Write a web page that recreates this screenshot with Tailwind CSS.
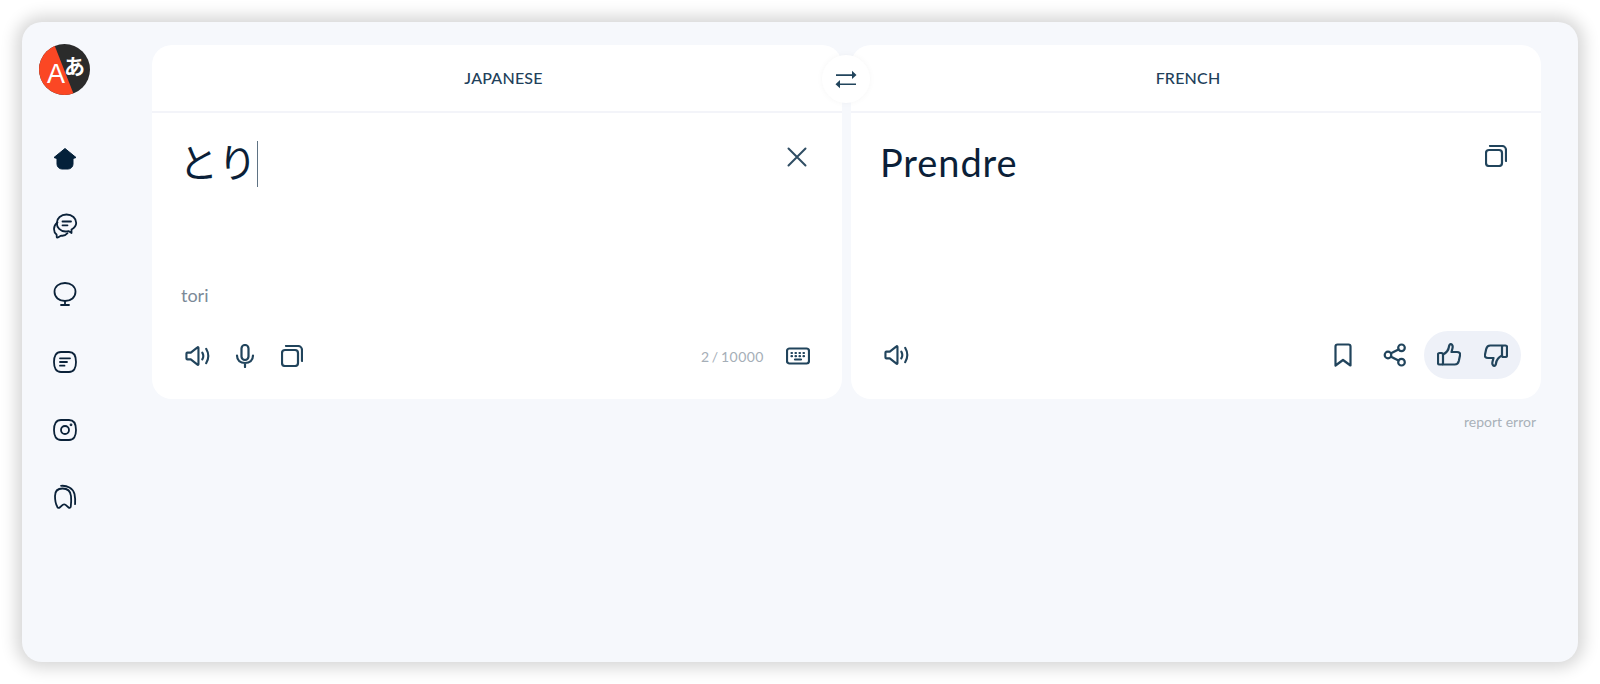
<!DOCTYPE html>
<html>
<head>
<meta charset="utf-8">
<script src="https://cdn.jsdelivr.net/npm/@tailwindcss/browser@4"></script>
</head>
<body class="bg-white font-['Lato','Noto_Sans_CJK_JP',sans-serif]">
<div class="w-[1600px] h-[684px] p-[22px] overflow-hidden">
  <div class="w-[1556px] h-[640px] rounded-[20px] bg-[#f6f8fc] shadow-[0_0_16px_6px_rgba(0,0,0,0.16)] flex pt-[22px]">
    <nav class="w-[130px] shrink-0 flex flex-col pl-[17px]">
      <svg class="w-[51px] h-[51px]" viewBox="0 0 51 51">
        <defs><clipPath id="c"><circle cx="25.5" cy="25.5" r="25.5"/></clipPath></defs>
        <g clip-path="url(#c)">
          <rect width="51" height="51" fill="#2b2b2b"/>
          <polygon points="0,0 15,0 35,51 0,51" fill="#fb4724"/>
        </g>
        <text x="8" y="39" font-size="27" fill="#fff" font-family="Liberation Sans">A</text>
        <text x="25" y="30" font-size="21" font-weight="700" fill="#fff" font-family="Noto Sans CJK JP">あ</text>
      </svg>
      <div class="flex flex-col gap-[43.7px] mt-[52px] ml-[14px] text-[#0b2239]">
        <svg class="w-6 h-6" viewBox="0 0 24 24" fill="#04213a" stroke="#04213a" stroke-width="1" stroke-linejoin="round"><path d="M12 1.500 23 10.500 20 11.500V17a5 5 0 0 1-5 5H9a5 5 0 0 1-5-5V11.500L1 10.500z"/></svg>
        <svg class="w-6 h-6 overflow-visible" viewBox="0 0 24 24" fill="none" stroke="currentColor" stroke-width="1.800" stroke-linecap="round" stroke-linejoin="round"><path d="M4.500 7.500C2 9.500 1 11.500 1 14c0 2.500 1 4.300 2.500 5.500.5.800-.2 2.500.5 3 1 .6 3-1.800 4.500-1.800 2.500.3 4.500-.7 6-2.500"/><path d="M13.500 -.5C8 -.5 3.800 3.300 3.800 8c0 4.500 3.400 8.500 8.700 8.500 1.200 0 2-.1 3-.4l3 1.900v-3.500c3-1.800 4.700-3.800 4.700-6.500 0-4.700-4-8.500-9.700-8.500z"/><path d="M9.500 6.500h8.500M9.500 10.300h5"/></svg>
        <svg class="w-6 h-6" viewBox="0 0 24 24" fill="none" stroke="currentColor" stroke-width="1.800" stroke-linecap="round" stroke-linejoin="round"><path d="M12 1c6 0 10.500 3.500 10.500 8.800 0 5.500-4.500 9.200-10.500 9.200S1.500 15.300 1.500 9.800C1.500 4.500 6 1 12 1z"/><path d="M12 19v3.500M8 23h8"/></svg>
        <svg class="w-6 h-6" viewBox="0 0 24 24" fill="none" stroke="currentColor" stroke-width="1.800" stroke-linecap="round" stroke-linejoin="round"><path d="M8 2h8C21 2 23 6 23 12S21 22 16 22H8C3 22 1 18 1 12S3 2 8 2z"/><path d="M7 8.300h10M7 12h7M7 15.700h4.500"/></svg>
        <svg class="w-6 h-6" viewBox="0 0 24 24" fill="none" stroke="currentColor" stroke-width="1.800" stroke-linecap="round" stroke-linejoin="round"><path d="M8 2h8C21 2 23 6 23 12S21 22 16 22H8C3 22 1 18 1 12S3 2 8 2z"/><circle cx="12" cy="12" r="4"/><circle cx="18" cy="6.800" r=".5" fill="currentColor"/></svg>
        <svg class="w-6 h-6 overflow-visible" viewBox="0 0 24 24" fill="none" stroke="currentColor" stroke-width="1.800" stroke-linecap="round" stroke-linejoin="round"><path d="M2 11c0-5 3-7.500 7.500-7.500S17.500 6 18 11c.3 3 .2 7-.2 10.500-.1 1.300-1.300 1.800-2.200 1l-3-2.600c-.9-.7-2-.7-2.900 0l-3 2.600c-.9.800-2.300.4-2.500-1C2.700 19 2 15 2 11z"/><path d="M8 .8C14 .3 20 3 21.500 9c.6 3 .9 6.500.6 10.200"/></svg>
      </div>
    </nav>
    <main class="w-[1389px] shrink-0 pt-px">
      <div class="relative flex gap-[9px]">
        <section class="w-[690px] h-[354px] bg-white rounded-[20px] flex flex-col">
          <div class="h-[68px] shrink-0 border-b-2 border-[#f3f4f9] flex items-center justify-center pl-[13px] text-[16px] font-medium text-[#21405a] tracking-[0.2px]">JAPANESE</div>
          <div class="flex justify-between pl-[27px] pr-[35px] pt-[28px]">
            <div class="flex items-start h-[46px]">
              <span class="text-[39px] leading-[38px] text-[#0b1f38] font-['Noto_Sans_CJK_JP',sans-serif] font-normal">とり</span>
              <span class="w-px h-[46px] bg-[#5f7384]"></span>
            </div>
            <svg class="w-5 h-5 mt-[6px]" viewBox="0 0 20 20" fill="none" stroke="#2f4d63" stroke-width="2" stroke-linecap="round"><path d="M1.500 1.500l17 17M18.500 1.500l-17 17"/></svg>
          </div>
          <div class="pl-[29px] mt-[96px] text-[18px] leading-6 text-[#7b8a98]">tori</div>
          <div class="flex items-center pl-[33px] pr-[32px] mt-[37px] h-6 text-[#21445c]">
            <svg class="w-[25px] h-6" viewBox="0 0 26 24" fill="none" stroke="currentColor" stroke-width="2.200" stroke-linecap="round" stroke-linejoin="round"><path d="M1.500 9.500v5a1 1 0 0 0 1 1h3.500l7 5.500a.6.6 0 0 0 1-.5V3.500a.6.6 0 0 0-1-.5l-7 5.500H2.500a1 1 0 0 0-1 1z"/><path d="M18 8.500c1.200 2 1.200 5 0 7M22 4.500c2.700 4.500 2.700 10.500 0 15"/></svg>
            <svg class="w-6 h-6 ml-[23px]" viewBox="0 0 24 24" fill="none" stroke="currentColor" stroke-width="2.200" stroke-linecap="round" stroke-linejoin="round"><rect x="8.500" y="1" width="7" height="15" rx="3.500"/><path d="M4 11.500c0 5 3.500 7.500 8 7.500s8-2.500 8-7.500M12 19v4"/></svg>
            <svg class="w-[22px] h-[22px] ml-[24px]" viewBox="0 0 22 22" fill="none" stroke="currentColor" stroke-width="2.200" stroke-linecap="round" stroke-linejoin="round"><rect x="1" y="5" width="16" height="16" rx="3"/><path d="M5 1h12a4 4 0 0 1 4 4v11"/></svg>
            <span class="ml-auto text-[14px] text-[#a5aeb7] tracking-[0.5px]">2&#8201;/&#8201;10000</span>
            <svg class="w-6 h-6 ml-[22px]" viewBox="0 0 24 24" fill="none" stroke="currentColor" stroke-width="2.200" stroke-linecap="round" stroke-linejoin="round"><rect x="1" y="4.500" width="22" height="15" rx="2.500"/><path d="M5.500 9h.5M9.500 9h.5M13.500 9h.5M17.500 9h.5M5.500 12.200h.5M17.500 12.200h.5M9.500 12.200h.5M13.500 12.200h.5M9 15.500h6"/></svg>
          </div>
        </section>
        <section class="w-[690px] h-[354px] bg-white rounded-[20px] flex flex-col">
          <div class="h-[68px] shrink-0 border-b-2 border-[#f3f4f9] flex items-center justify-center pr-[16px] text-[16px] font-medium text-[#21405a] tracking-[0.2px]">FRENCH</div>
          <div class="flex justify-between pl-[29px] pr-[34px] pt-[26px] h-[218px]">
            <span class="text-[38px] leading-[46px] tracking-[0.9px] text-[#0b1f38]">Prendre</span>
            <svg class="w-[22px] h-[22px] mt-[6px]" viewBox="0 0 22 22" fill="none" stroke="#21445c" stroke-width="2.200" stroke-linecap="round" stroke-linejoin="round"><rect x="1" y="5" width="16" height="16" rx="3"/><path d="M5 1h12a4 4 0 0 1 4 4v11"/></svg>
          </div>
          <div class="flex items-center pl-[33px] pr-[20px] h-[48px] text-[#21445c]">
            <svg class="w-[25px] h-6" viewBox="0 0 26 24" fill="none" stroke="currentColor" stroke-width="2.200" stroke-linecap="round" stroke-linejoin="round"><path d="M1.500 9.500v5a1 1 0 0 0 1 1h3.500l7 5.500a.6.6 0 0 0 1-.5V3.500a.6.6 0 0 0-1-.5l-7 5.500H2.500a1 1 0 0 0-1 1z"/><path d="M18 8.500c1.200 2 1.200 5 0 7M22 4.500c2.700 4.500 2.700 10.500 0 15"/></svg>
            <svg class="w-6 h-6 ml-auto" viewBox="0 0 24 24" fill="none" stroke="currentColor" stroke-width="2.200" stroke-linecap="round" stroke-linejoin="round"><path d="M4.500 3.500a2 2 0 0 1 2-2h11a2 2 0 0 1 2 2v19L12 17l-7.500 5.500z"/></svg>
            <svg class="w-6 h-6 ml-[28px]" viewBox="0 0 24 24" fill="none" stroke="currentColor" stroke-width="2.200" stroke-linecap="round" stroke-linejoin="round"><circle cx="18.500" cy="4.800" r="3.300"/><circle cx="5" cy="12" r="3.300"/><circle cx="18.500" cy="19.200" r="3.300"/><path d="M8 10.300l7.500-3.900M8 13.700l7.500 3.900"/></svg>
            <div class="ml-[17px] w-[97px] h-[48px] rounded-full bg-[#eef1f8] flex items-center justify-between px-[13px]">
              <svg class="w-6 h-6" viewBox="0 0 24 24" fill="none" stroke="currentColor" stroke-width="2.200" stroke-linecap="round" stroke-linejoin="round"><rect x="1" y="10" width="5" height="11.500" rx="1.500"/><path d="M6 11.500c3-1.500 5.500-4 6-8 .2-1.600 1-2.500 2-2.300 1.500.3 2 2 1.500 4l-1 3.800h5.500c2.500 0 3.500 1.500 3 3.500l-1.200 5.500c-.5 2-1.800 3.500-4 3.500H6"/></svg>
              <svg class="w-6 h-6" viewBox="0 0 24 24" fill="none" stroke="currentColor" stroke-width="2.200" stroke-linecap="round" stroke-linejoin="round"><rect x="18" y="2.500" width="5" height="11.500" rx="1.500"/><path d="M18 12.500c-3 1.500-5.500 4-6 8-.2 1.600-1 2.500-2 2.300-1.500-.3-2-2-1.500-4l1-3.800H4c-2.500 0-3.500-1.500-3-3.500L2.200 6c.5-2 1.800-3.500 4-3.500H18"/></svg>
            </div>
          </div>
        </section>
        <div class="absolute left-[670px] top-[10px] w-[48px] h-[48px] rounded-full bg-white shadow-[0_0_6px_rgba(0,0,0,0.04)] flex items-center justify-center">
          <svg class="w-6 h-6" viewBox="0 0 24 24" fill="#21445c" stroke="none"><path d="M2 9h16V5.500l4.500 4.300-4.500 4V10.700H2z" transform="translate(0 -1.800)"/><path d="M22 15H6v-3.500l-4.500 4.300 4.500 4v-3.100h16z" transform="translate(0 1.400)"/></svg>
        </div>
      </div>
      <div class="text-right pr-[5px] mt-[14px] text-[14px] leading-[18px] text-[#a9b1b9]">report error</div>
    </main>
  </div>
</div>
</body>
</html>
